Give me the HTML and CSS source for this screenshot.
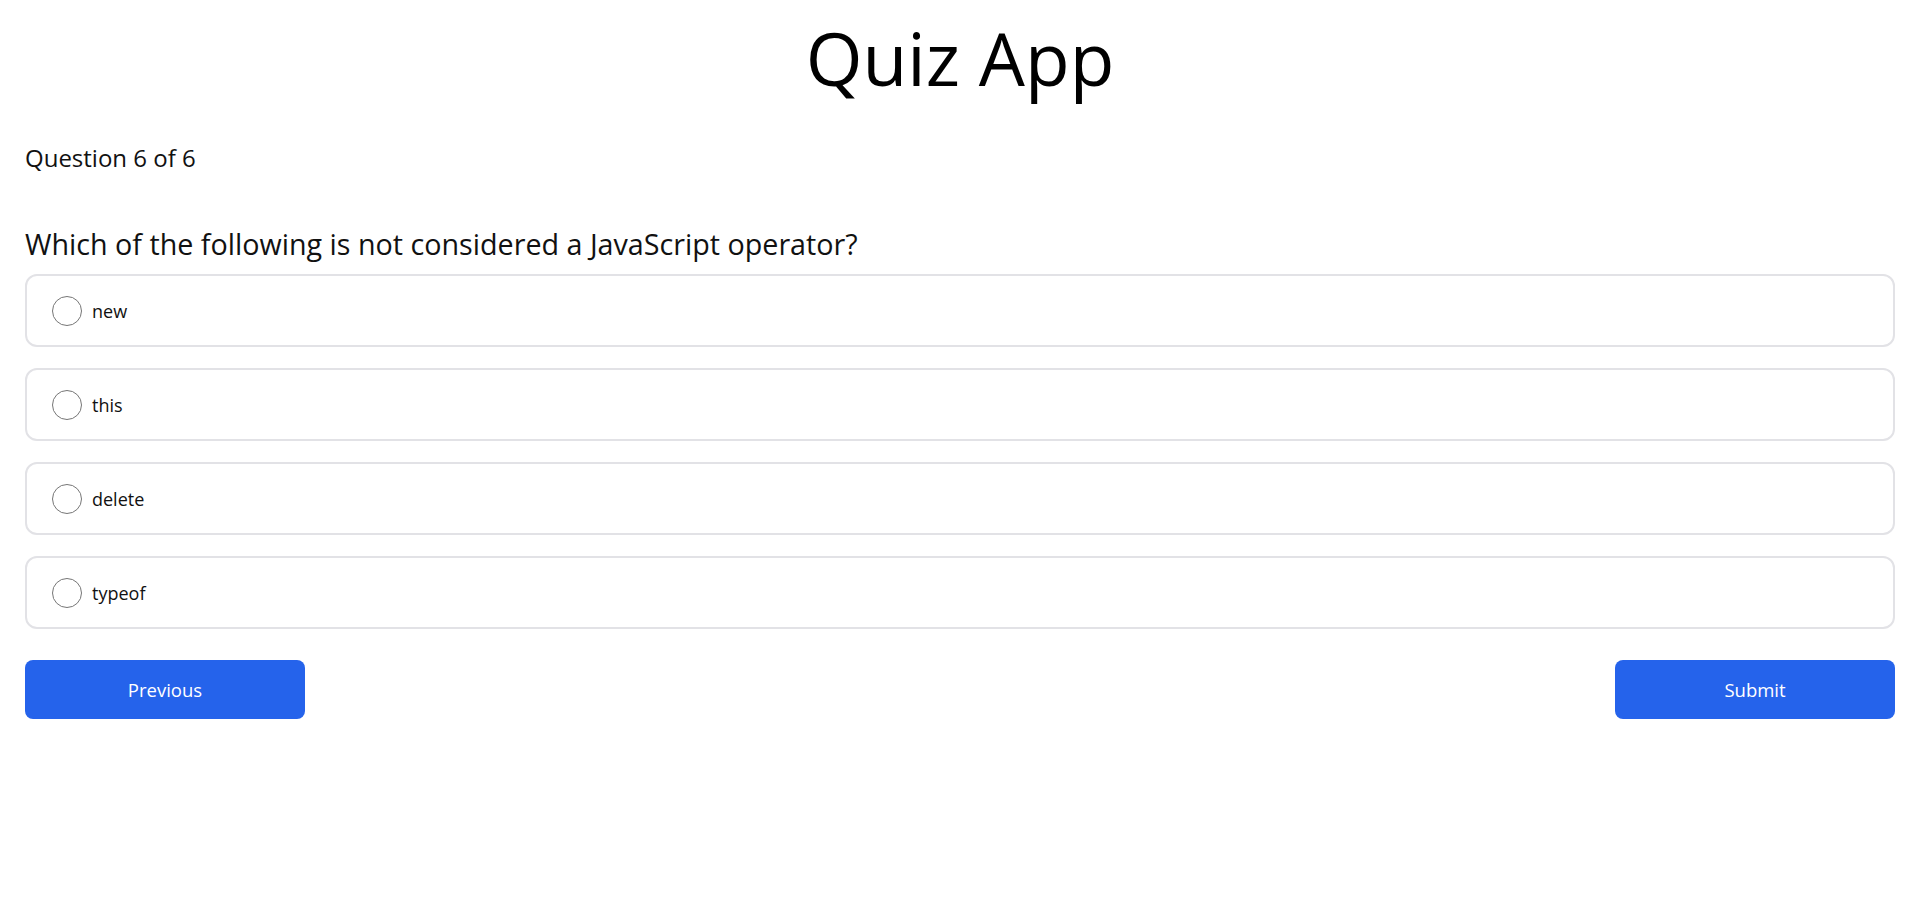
FILE: index.html
```html
<!DOCTYPE html>
<html lang="en">
<head>
<meta charset="utf-8">
<title>Quiz App</title>
<link rel="stylesheet" href="styles.css">
</head>
<body>
<main class="app">
  <h1 class="title">Quiz App</h1>
  <p class="progress">Question 6 of 6</p>
  <h2 class="question">Which of the following is not considered a JavaScript operator?</h2>
  <ul class="options">
    <li class="option"><label class="option-label"><input class="radio" type="radio" name="answer"><span>new</span></label></li>
    <li class="option"><label class="option-label"><input class="radio" type="radio" name="answer"><span>this</span></label></li>
    <li class="option"><label class="option-label"><input class="radio" type="radio" name="answer"><span>delete</span></label></li>
    <li class="option"><label class="option-label"><input class="radio" type="radio" name="answer"><span>typeof</span></label></li>
  </ul>
  <div class="nav">
    <button class="btn" type="button">Previous</button>
    <button class="btn" type="button">Submit</button>
  </div>
</main>
</body>
</html>
```
FILE: styles.css
```css
* { box-sizing: border-box; }
html, body { margin: 0; background: #fff; }
body {
  font-family: "Open Sans", "Noto Sans", "Liberation Sans", sans-serif;
  color: #111;
}
.app {
  padding: 0 23px 0 25px;
}
.title {
  margin: 18px 0 0;
  font-size: 73px;
  line-height: 80px;
  font-weight: 400;
  text-align: center;
  color: #000;
}
.progress {
  margin: 45px 0 0;
  font-size: 24px;
  line-height: 30px;
}
.question {
  margin: 53px 0 0;
  font-size: 28.7px;
  line-height: 36px;
  font-weight: 400;
}
.options {
  list-style: none;
  margin: 12px 0 0;
  padding: 0;
  display: flex;
  flex-direction: column;
  gap: 21px;
}
.option {
  height: 73px;
  border: 2px solid #e2e2e6;
  border-radius: 12px;
}
.option-label {
  height: 100%;
  display: flex;
  align-items: center;
  gap: 10px;
  padding-left: 25px;
  font-size: 18px;
  cursor: pointer;
}
.radio {
  appearance: none;
  -webkit-appearance: none;
  margin: 0;
  width: 30px;
  height: 30px;
  border: 1.5px solid #767676;
  border-radius: 50%;
  background: #fff;
}
.nav {
  margin-top: 31px;
  display: flex;
  justify-content: space-between;
}
.btn {
  width: 280px;
  height: 59px;
  border: none;
  border-radius: 8px;
  background: #2563eb;
  color: #fff;
  font-family: inherit;
  font-size: 18.5px;
}
```
